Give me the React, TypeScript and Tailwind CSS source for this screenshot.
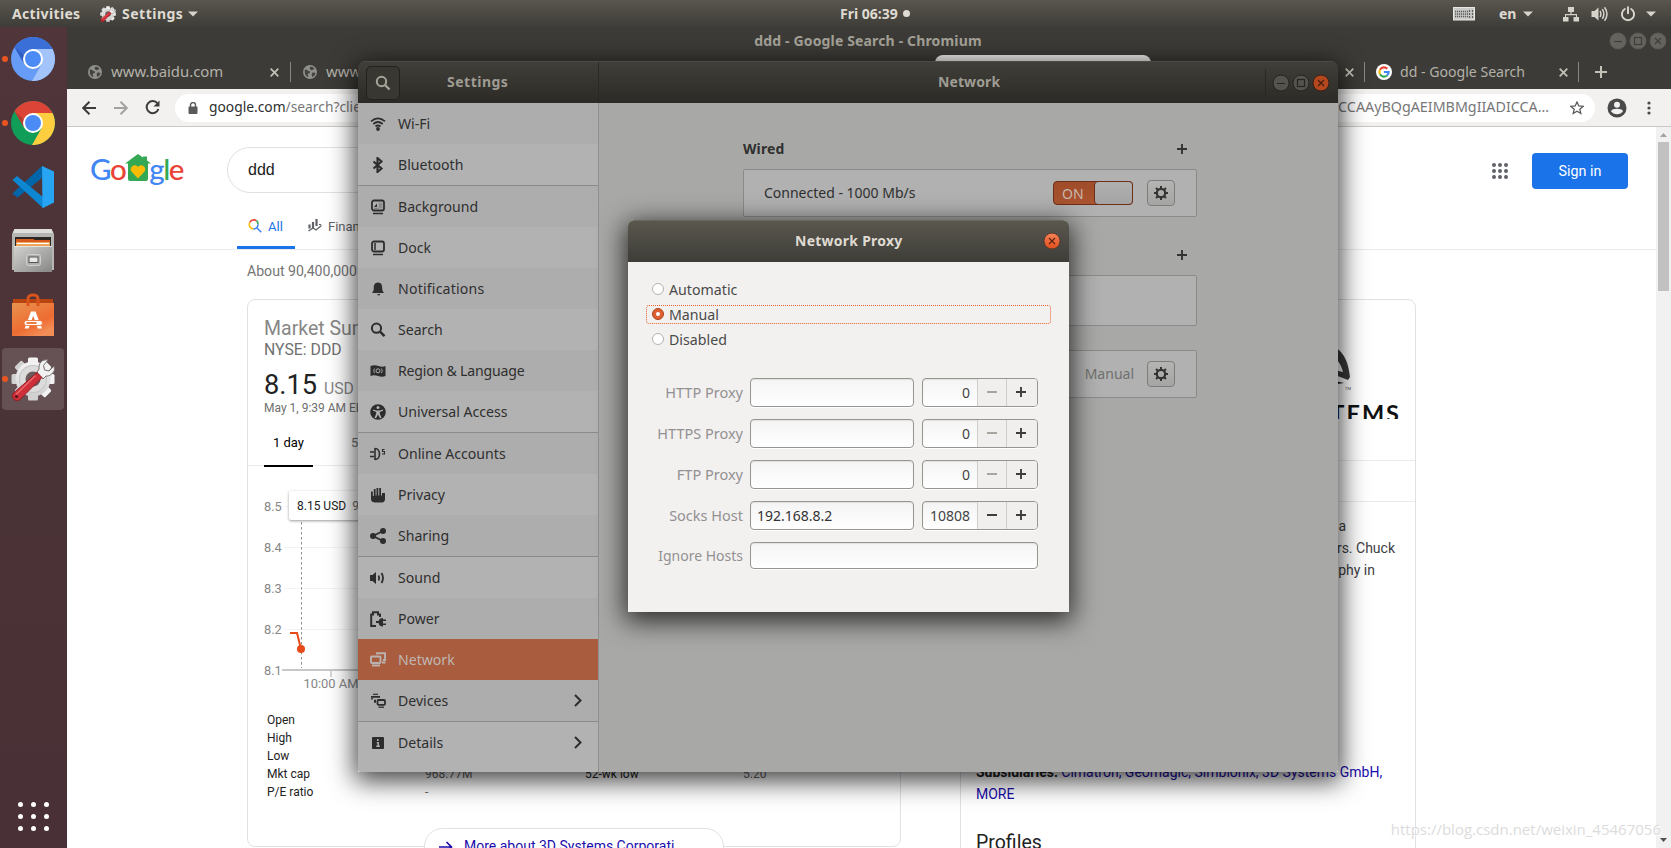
import React from "react";

const UI = "font-['Noto_Sans','Open_Sans',sans-serif]";

/* ---------- top panel ---------- */

function Caret() {
  return (
    <svg width="10" height="6" viewBox="0 0 10 6">
      <path d="M0 0.5h10L5 5.5z" fill="#d6d3cb" />
    </svg>
  );
}

function GearWrench({ size }: { size: number }) {
  return (
    <svg width={size} height={size} viewBox="0 0 44 44">
      <defs>
        <linearGradient id="gearFill" x1="0" y1="0" x2="0" y2="1">
          <stop offset="0" stopColor="#f4f4f4" />
          <stop offset="1" stopColor="#cfcfcf" />
        </linearGradient>
      </defs>
      <g fill="url(#gearFill)">
        {[0, 45, 90, 135].map((a) => (
          <rect key={a} x="17" y="0.5" width="10" height="43" rx="1.5" transform={`rotate(${a} 22 22)`} />
        ))}
        <circle cx="22" cy="22" r="17.5" />
      </g>
      <circle cx="22" cy="22" r="14" fill="#c4c4c4" />
      <circle cx="22" cy="22" r="13" fill="#dcdcdc" />
      <circle cx="22" cy="22" r="7.5" fill="#6d5a5c" />
      <path
        d="M28 18 L32 22 L35 19 C38 19.5 42 17 43.5 13 L43 9 L38 14 L33.5 13 L32.5 8.5 L37 3 C31 2 27.500 6 28 12 L26 15z"
        fill="#f1f1f1"
        stroke="#77716e"
        strokeWidth="1"
      />
      <path d="M26 15.500 L31 20.500 L8.500 43 C5 45.500 -0.500 41 2 36.500z" fill="#cf2f38" stroke="#8f1820" strokeWidth="0.900" />
      <path d="M24.500 18.500 L5 37.500" stroke="#ec6a6c" strokeWidth="1.500" />
      <circle cx="5.500" cy="39.500" r="1.600" fill="#57151a" />
    </svg>
  );
}

function TopPanel() {
  return (
    <div
      className={`absolute inset-x-0 top-0 flex h-[27px] items-center bg-linear-to-b from-[#59564e] to-[#3e3d38] font-bold text-[#dfdbd2] ${UI}`}
    >
      <div className="w-[100px] pl-3 text-[14px] tracking-[0.35px]">Activities</div>
      <div className="flex items-center">
        <GearWrench size={16} />
        <span className="ml-1.5 w-[61px] text-[14px] tracking-[0.5px] whitespace-nowrap">Settings</span>
        <span className="ml-[5px]">
          <Caret />
        </span>
      </div>
      <div className="ml-[642px] flex w-[71px] items-center gap-[5px]">
        <span className="text-[14px] whitespace-nowrap">Fri 06:39</span>
        <span className="size-[7px] shrink-0 rounded-full bg-[#dfdbd2]" />
      </div>
      <div className="ml-auto flex items-center pr-[15px]">
        <svg width="22" height="14" viewBox="0 0 22 14">
          <rect x="0.500" y="0.500" width="21" height="12.500" fill="#c9c9c7" stroke="#e8e6e2" />
          <path d="M2 4.500h13M2 7h13M2 9.500h13" stroke="#5c5b57" strokeWidth="1.400" strokeDasharray="1.200 .8" />
          <path d="M16.500 3v8M19.500 3v8" stroke="#5c5b57" strokeWidth="1.200" strokeDasharray="2 1" />
        </svg>
        <span className="mr-[6px] ml-[24px] w-[18px] text-[14px]">en</span>
        <Caret />
        <svg className="ml-[30px]" width="16" height="16" viewBox="0 0 16 16" fill="#d6d3cb">
          <path d="M5 1h6v5H8.600v2H14v3h2v4.500h-5.500V11H13V9.200H3V11h2.500v4.500H0V11h2V8h5.400V6H5z" />
        </svg>
        <svg className="ml-[12px]" width="17" height="16" viewBox="0 0 17 16" fill="#d6d3cb">
          <path d="M0.500 5h3L7.500 1.500v13L3.500 11h-3z" />
          <path d="M9 5q1.800 3 0 6M11.300 3.200q3.200 4.800 0 9.600M13.500 1.300q5 6.700 0 13.400" fill="none" stroke="#d6d3cb" strokeWidth="1.500" />
        </svg>
        <svg className="ml-[12px]" width="16" height="16" viewBox="0 0 16 16" fill="none" stroke="#d6d3cb" strokeWidth="2" strokeLinecap="round">
          <path d="M4.800 3a6.100 6.100 0 1 0 6.400 0M8 1.200v6" />
        </svg>
        <span className="ml-[10px]">
          <Caret />
        </span>
      </div>
    </div>
  );
}

/* ---------- dock ---------- */

function BrowserIcon({ top, left, right, topShade }: { top: string; left: string; right: string; topShade: string }) {
  return (
    <svg width="44" height="44" viewBox="0 0 44 44">
      <circle cx="22" cy="22" r="22" fill={left} />
      <path d="M3.500 10 A22 22 0 0 1 41.500 12 L22 12 L13.300 27z" fill={top} />
      <path d="M3.500 10 L13.300 27 L12.500 18z" fill={topShade} />
      <path d="M41.500 12 A22 22 0 0 1 21 44 L30.700 27 L22 12z" fill={right} />
      <circle cx="22" cy="22" r="10" fill="#fff" />
      <circle cx="22" cy="22" r="8" fill="#4c8bf5" />
    </svg>
  );
}

function CodeIcon() {
  return (
    <svg width="44" height="44" viewBox="0 0 44 44">
      <path d="M1.500 28.500 L31 1 V13 L6.500 32.500z" fill="#0065a9" />
      <path d="M6 11 L32 32 V43 L1.500 15z" fill="#0d87d1" />
      <path d="M31 1 L43 6.500 V37.500 L32 43 L31.500 43z" fill="#27a5f2" />
    </svg>
  );
}

function FilesIcon() {
  return (
    <svg width="44" height="46" viewBox="0 0 44 46">
      <defs>
        <linearGradient id="cab" x1="0" y1="0" x2="1" y2="1">
          <stop offset="0" stopColor="#d2d2d0" />
          <stop offset="1" stopColor="#878785" />
        </linearGradient>
      </defs>
      <path d="M3.500 1h37l2.500 5v36H1V6z" fill="#b5b5b3" />
      <path d="M3.500 1h37l1.500 4H2z" fill="#dededc" />
      <rect x="4" y="9" width="36" height="10" fill="#2b2722" />
      <path d="M5 11h17l2 1h15v8H5z" fill="#d65a1b" />
      <rect x="5" y="14" width="34" height="6" fill="#f0a050" />
      <path d="M6 15.500h32" stroke="#fff" strokeWidth="1.200" />
      <rect x="3" y="18" width="38" height="26" fill="url(#cab)" />
      <path d="M3 18.500h38" stroke="#e4e4e2" />
      <rect x="15.500" y="26.500" width="14" height="11" rx="2" fill="#b0b0ae" stroke="#d0d0ce" />
      <rect x="18" y="29" width="9" height="5.500" fill="#e8e8e6" stroke="#555" />
    </svg>
  );
}

function SoftwareIcon() {
  return (
    <svg width="44" height="46" viewBox="0 0 44 46">
      <defs>
        <linearGradient id="bag" x1="0" y1="0" x2="0.600" y2="1">
          <stop offset="0" stopColor="#e89350" />
          <stop offset="0.700" stopColor="#ee6c31" />
          <stop offset="1" stopColor="#f38d58" />
        </linearGradient>
      </defs>
      <path d="M2 7h40v8H2z" fill="#b8450f" />
      <rect x="1" y="11" width="42" height="33" fill="url(#bag)" />
      <path d="M17 14V7a4 4 0 0 1 4-4h2a4 4 0 0 1 4 4v7" fill="none" stroke="#d9531d" strokeWidth="3" />
      <path d="M20 19.500h4.500l6.500 17h-4.200l-4.600-12.800-4.600 12.800h-4z" fill="#fff" />
      <rect x="13" y="28.500" width="18.500" height="5" rx="2.500" fill="#fff" stroke="#ee6c31" strokeWidth="0.800" />
      <path d="M15.500 31h10" stroke="#ee6c31" strokeWidth="1.800" />
    </svg>
  );
}

function DockItem({ children, running, active }: { children: React.ReactNode; running?: boolean; active?: boolean }) {
  return (
    <div className="flex h-16 items-center">
      <span className={`z-10 ml-0.5 size-[6px] shrink-0 rounded-full ${running ? "bg-[#e95420]" : ""}`} />
      <div className={`-ml-1.5 flex size-[62px] items-center justify-center rounded-[4px] ${active ? "bg-white/15" : ""}`}>{children}</div>
    </div>
  );
}

function Dock() {
  return (
    <div className="absolute top-[27px] left-0 flex h-[821px] w-[67px] flex-col bg-linear-to-b from-[#50353a] via-[#4a3337] to-[#493036]">
      <DockItem running>
        <BrowserIcon top="#3b6fd8" topShade="#2f5cc0" left="#669cf6" right="#a3c4fb" />
      </DockItem>
      <DockItem running>
        <BrowserIcon top="#db4437" topShade="#b93a2e" left="#0f9d58" right="#ffcd40" />
      </DockItem>
      <DockItem>
        <CodeIcon />
      </DockItem>
      <DockItem>
        <FilesIcon />
      </DockItem>
      <DockItem>
        <SoftwareIcon />
      </DockItem>
      <DockItem running active>
        <GearWrench size={44} />
      </DockItem>
      <div className="mt-auto mb-[17px] ml-[18px] grid w-8 grid-cols-3 gap-x-[7px] gap-y-[7px]">
        {Array.from({ length: 9 }, (_, i) => (
          <span key={i} className="size-[5px] rounded-full bg-white" />
        ))}
      </div>
    </div>
  );
}

/* ---------- browser window ---------- */

function WinBtn({ kind, tone }: { kind: "min" | "max" | "close"; tone: "faded" | "dim" | "dimClose" | "close" }) {
  const fill = { faded: "#65635d", dim: "#55534d", dimClose: "#b5471f", close: "url(#closeFill)" }[tone];
  const ring = { faded: "#5d5b56", dim: "#262521", dimClose: "#3a2018", close: "#5b3a2c" }[tone];
  const ink = { faded: "#3f3e3a", dim: "#262521", dimClose: "#40200f", close: "#5a2410" }[tone];
  return (
    <svg width="18" height="18" viewBox="0 0 18 18" fill="none" stroke={ink} strokeWidth="1.200">
      <defs>
        <linearGradient id="closeFill" x1="0" y1="0" x2="0" y2="1">
          <stop offset="0" stopColor="#f58258" />
          <stop offset="1" stopColor="#e44e1d" />
        </linearGradient>
      </defs>
      <circle cx="9" cy="9" r="8" fill={fill} stroke={ring} strokeWidth="1" />
      {kind === "min" && <path d="M5 9.500h8" />}
      {kind === "max" && <rect x="5.500" y="5.500" width="7" height="7" />}
      {kind === "close" && <path d="M6 6l6 6M12 6l-6 6" />}
    </svg>
  );
}

function Cross() {
  return (
    <svg width="9" height="9" viewBox="0 0 9 9" stroke="#c4c1b8" strokeWidth="1.700">
      <path d="M0.700 0.700l7.600 7.600M8.300 0.700L0.700 8.300" />
    </svg>
  );
}

function Globe() {
  return (
    <svg width="14" height="14" viewBox="0 0 14 14">
      <circle cx="7" cy="7" r="7" fill="#8f8f8d" />
      <path d="M2 4.500c2-.5 2.500 1 4 1.500s1.500 2-.5 2.500S6 11 5 12C2.500 11 1.200 8 2 4.500zM7 2c2-.8 4 .5 4.500 2-1.500 0-1.500 1.500-3 1.200S6 3 7 2zM9 8c1.500-.8 3-.2 3.500 0-.5 2-1.500 3.200-3 4-.8-1-1-3-.5-4z" fill="#44433f" />
    </svg>
  );
}

function GIcon() {
  return (
    <svg width="16" height="16" viewBox="0 0 16 16" fill="none" strokeWidth="2.200">
      <circle cx="8" cy="8" r="8" fill="#fff" />
      <path d="M11.300 4.700A4.600 4.600 0 0 0 4 5.700" stroke="#ea4335" />
      <path d="M4 5.700a4.600 4.600 0 0 0 0 4.600" stroke="#fbbc05" />
      <path d="M4 10.300a4.600 4.600 0 0 0 7 1.200" stroke="#34a853" />
      <path d="M11 11.500A4.600 4.600 0 0 0 12.600 8H8" stroke="#4285f4" />
    </svg>
  );
}

function Tab({ title, icon }: { title: string; icon: React.ReactNode }) {
  return (
    <div className="flex h-5 w-[215px] shrink-0 items-center border-r border-[#8b8983] pr-[11px] pl-[12px]">
      {icon}
      <span className="-mt-px ml-[9px] text-[14.9px] whitespace-nowrap text-[#b4b1a9]">{title}</span>
      <span className="ml-auto">
        <Cross />
      </span>
    </div>
  );
}

function BrowserChrome() {
  return (
    <div className={`flex h-[100px] flex-col ${UI}`}>
      <div className="flex h-7 shrink-0 items-center bg-[#3c3b37]">
        <span className="-mt-0.5 ml-[680px] w-[242px] text-center text-[14px] tracking-[0.15px] font-bold whitespace-nowrap text-[#a5a299]">
          ddd - Google Search - Chromium
        </span>
        <span className="ml-auto flex gap-[2px] pr-[4px]">
          <WinBtn kind="min" tone="faded" />
          <WinBtn kind="max" tone="faded" />
          <WinBtn kind="close" tone="faded" />
        </span>
      </div>
      <div className="flex h-[34px] shrink-0 items-center bg-[#3c3b37] pl-[9px]">
        <Tab title="www.baidu.com" icon={<Globe />} />
        <Tab title="www.baidu.com" icon={<Globe />} />
        <div className="w-[429px]" />
        <div className="h-full w-[216px] rounded-t-lg bg-[#f2f1f0]" />
        <div className="flex h-5 w-[214px] items-center justify-end border-r border-[#8b8983] pr-[10px]">
          <Cross />
        </div>
        <div className="flex h-5 w-[214px] items-center border-r border-[#8b8983] pr-[10px] pl-[11px]">
          <GIcon />
          <span className="ml-2 text-[14.1px] whitespace-nowrap text-[#b4b1a9]">dd - Google Search</span>
          <span className="ml-auto">
            <Cross />
          </span>
        </div>
        <svg className="ml-4" width="12" height="12" viewBox="0 0 12 12" stroke="#c4c1b8" strokeWidth="2">
          <path d="M6 0v12M0 6h12" />
        </svg>
      </div>
      <div className="flex h-[38px] shrink-0 items-center border-b border-[#c9c8c6] bg-[#f2f1f0] pl-[15px]">
        <svg width="14" height="14" viewBox="0 0 14 14" fill="none" stroke="#3d3c3a" strokeWidth="2">
          <path d="M14 7H1.500M7.500 0.700L1.200 7l6.300 6.300" />
        </svg>
        <svg className="ml-[18px]" width="14" height="14" viewBox="0 0 14 14" fill="none" stroke="#a3a2a0" strokeWidth="2">
          <path d="M0 7h12.500M6.500 0.700L12.800 7l-6.300 6.300" />
        </svg>
        <svg className="ml-[17px]" width="15" height="15" viewBox="0 0 15 15" fill="none" stroke="#3d3c3a" strokeWidth="2">
          <path d="M12.500 3.500A6 6 0 1 0 13.400 9" />
          <path d="M14.500 0.500v6h-6z" fill="#3d3c3a" stroke="none" />
        </svg>
        <div className="ml-[15px] flex h-7 w-[1420px] items-center rounded-full bg-white pr-[11px] pl-[13px]">
          <svg width="10" height="12" viewBox="0 0 10 12">
            <rect x="0.500" y="4.500" width="9" height="7.500" rx="1" fill="#5a5a5a" />
            <path d="M2.500 5V3a2.500 2.500 0 0 1 5 0v2" fill="none" stroke="#5a5a5a" strokeWidth="1.400" />
          </svg>
          <span className="ml-[11px] text-[13.8px] whitespace-nowrap text-[#777]">
            <span className="text-[#2e2e2e]">google.com</span>/search?client
          </span>
          <span className="-mt-px ml-auto text-[14.3px] whitespace-nowrap text-[#777]">DICCAAyBQgAEIMBMgIIADICCA…</span>
          <svg className="ml-[21px]" width="14" height="14" viewBox="0 0 14 14" fill="none" stroke="#5a5a5a" strokeWidth="1.300">
            <path d="M7 1l1.800 4 4.300.4-3.300 2.900 1 4.200L7 10.300l-3.800 2.200 1-4.200L.9 5.400 5.200 5z" />
          </svg>
        </div>
        <svg className="ml-[12px]" width="20" height="20" viewBox="0 0 20 20">
          <circle cx="10" cy="10" r="9.500" fill="#4a4a4a" />
          <circle cx="10" cy="6.800" r="3" fill="#f2f1f0" />
          <path d="M4 13.200c1-3.200 11-3.200 12 0-2.500 4-9.500 4-12 0z" fill="#f2f1f0" />
        </svg>
        <svg className="ml-[20px]" width="4" height="14" viewBox="0 0 4 14" fill="#4a4a4a">
          <circle cx="2" cy="2" r="1.600" />
          <circle cx="2" cy="7" r="1.600" />
          <circle cx="2" cy="12" r="1.600" />
        </svg>
      </div>
    </div>
  );
}

function GoogleLogo() {
  return (
    <div className="flex h-[46px] w-[136px] items-center text-[29.5px] leading-none tracking-[-1.5px] font-['Lato',sans-serif] font-medium">
      <span className="-mt-0.5 -ml-px text-[#4285f4]">G</span>
      <span className="-mt-0.5 text-[#ea4335]">o</span>
      <svg className="-mt-[6px] mr-[-1px] ml-0" width="26" height="27" viewBox="0 0 26 27">
        <path d="M0 9.500L13 0l5 3.500V2.500h4v4L26 9.500H23V25a2 2 0 0 1-2 2H5a2 2 0 0 1-2-2V9.500z" fill="#34a853" />
        <path d="M13 24.500L6.500 17.500c-3-4.500 3.500-9 6.500-4.500 3-4.500 9.500 0 6.500 4.500z" fill="#fbbc05" />
      </svg>
      <span className="-mt-0.5 -ml-[1px] text-[#4285f4]">g</span>
      <span className="-mt-0.5 text-[#34a853]">l</span>
      <span className="-mt-0.5 text-[#ea4335]">e</span>
    </div>
  );
}

function PageHeader() {
  return (
    <div className="flex h-[123px] shrink-0 flex-col border-b border-[#ebebeb]">
      <div className="mt-5 flex h-[46px] items-center pl-6">
        <GoogleLogo />
        <div className="flex h-[46px] w-[692px] items-center rounded-full border border-[#dfe1e5] pl-5 text-[16px] text-[#222] font-['Liberation_Sans',sans-serif]">
          <span>ddd</span>
        </div>
        <div className="mt-[2px] ml-auto flex items-center pr-7">
          <div className="mr-6 grid grid-cols-3 gap-[2px]">
            {Array.from({ length: 9 }, (_, i) => (
              <span key={i} className="size-1 rounded-full bg-[#5f6368]" />
            ))}
          </div>
          <div className="flex h-9 w-24 items-center justify-center rounded-[4px] bg-[#1a73e8] pt-px text-[14.3px] text-white">Sign in</div>
        </div>
      </div>
      <div className="mt-auto flex h-10 pl-[170px] text-[13px]">
        <div className="flex w-[58px] items-start border-b-[3px] border-[#1a73e8] pt-[8px] pl-[11px] text-[#1a73e8]">
          <svg className="mt-[2px] mr-[6px]" width="14" height="14" viewBox="0 0 14 14" fill="none" strokeWidth="1.600">
            <path d="M1.700 3.500A4.600 4.600 0 0 1 8.500 1.700" stroke="#ea4335" />
            <path d="M8.500 1.700A4.600 4.600 0 0 1 10 5.500" stroke="#34a853" />
            <path d="M1.700 3.500A4.600 4.600 0 0 0 5.500 10" stroke="#fbbc05" />
            <path d="M5.500 10A4.600 4.600 0 0 0 10 5.500M8.700 8.700L13.300 13.300" stroke="#4285f4" />
          </svg>
          All
        </div>
        <div className="flex items-start pt-[8px] pl-[13px] text-[#5f6368]">
          <svg className="mt-[2px] mr-[6px]" width="14" height="13" viewBox="0 0 14 13" fill="none" stroke="#5f6368">
            <path d="M1.500 5.500v4M5 3v6M8.500 0v7M12 5v1" strokeWidth="2.200" />
            <path d="M0.500 12l4.500-3 3 2 5.500-4.500" strokeWidth="1.400" />
          </svg>
          Finance
        </div>
      </div>
    </div>
  );
}

function PriceChart() {
  return (
    <svg width="652" height="245" viewBox="248 466 652 245" className="block shrink-0" fontFamily="Roboto, sans-serif" fontSize="12.8" fill="#878787">
      {[507, 548, 589, 630].map((y) => (
        <path key={y} d={`M284 ${y - 0.5}H880`} stroke="#f3f3f3" />
      ))}
      {["8.5", "8.4", "8.3", "8.2", "8.1"].map((t, i) => (
        <text key={t} x="264" y={511 + i * 41}>
          {t}
        </text>
      ))}
      <path d="M282 670H880" stroke="#c8c8c8" strokeWidth="2" />
      <path d="M331 670v7" stroke="#c8c8c8" strokeWidth="1.500" />
      <text x="303.500" y="688" fontSize="12.9">
        10:00 AM
      </text>
      <path d="M301.500 522V668" stroke="#909090" strokeDasharray="2.500 2.500" />
      <path d="M290 633H297L301 649" fill="none" stroke="#e64a19" strokeWidth="2" />
      <circle cx="301" cy="649" r="4" fill="#e64a19" />
    </svg>
  );
}

const quotes = [
  ["Open", "", "", ""],
  ["High", "", "", ""],
  ["Low", "", "", ""],
  ["Mkt cap", "968.77M", "52-wk low", "5.20"],
  ["P/E ratio", "-", "", ""],
];

function MarketCard() {
  return (
    <div className="relative flex h-[548px] w-[654px] flex-col rounded-lg border border-[#dfe1e5]">
      <div className="pt-[17px] pl-4">
        <div className="h-6 text-[19.5px] leading-6 text-[#878787]">Market Summary</div>
        <div className="h-5 text-[15.8px] leading-[18px] text-[#707070]">NYSE: DDD</div>
        <div className="mt-[7px] h-[34px] leading-[34px] text-[#222]">
          <span className="text-[27.2px]">8.15</span> <span className="ml-[3px] text-[15.8px] text-[#878787]">USD</span>
        </div>
        <div className="h-[14px] text-[12px] leading-[13px] text-[#707070]">May 1, 9:39 AM EDT</div>
      </div>
      <div className="flex h-[50px] border-b border-[#ebebeb] pl-4 text-[13px] leading-[54px] text-[#757575]">
        <div className="-mb-[2px] w-[49px] border-b-2 border-black text-center text-black">1 day</div>
        <div className="pl-[38px]">5 days</div>
      </div>
      <PriceChart />
      <div className="grid grid-cols-[158px_160px_158px_1fr] pl-[19px] text-[12px] leading-[18px] text-[#222]">
        {quotes.flatMap((row, r) =>
          row.map((cell, c) => (
            <span key={`${r}-${c}`} className={`h-[18px] ${c % 2 ? "text-[#666]" : ""}`}>
              {cell}
            </span>
          )),
        )}
      </div>
      <div className="absolute top-[191px] left-[41px] flex h-[29px] w-[150px] items-center gap-[6px] rounded-[2px] bg-white pl-2 text-[12px] whitespace-nowrap text-[#222] shadow-[0_1px_3px_rgba(0,0,0,0.4)]">
        <span>8.15 USD</span>
        <span className="text-[#757575]">9:39 AM</span>
      </div>
      <div className="absolute top-[528px] left-[176px] flex h-[37px] w-[300px] items-center rounded-full border border-[#dfe1e5] bg-white pl-[14px] text-[14px] whitespace-nowrap text-[#1a0dab]">
        <svg className="mr-[11px]" width="14" height="12" viewBox="0 0 14 12" fill="none" stroke="#1a0dab" strokeWidth="1.700">
          <path d="M0 6h12M7.500 1l5 5-5 5" />
        </svg>
        More about 3D Systems Corporati
      </div>
    </div>
  );
}

function KnowledgeCard() {
  return (
    <div className="flex h-[560px] w-[456px] flex-col rounded-t-lg border border-[#dfe1e5] text-[14px] leading-[22px] text-[#3c4043]">
      <div className="flex h-[161px] flex-col items-end border-b border-[#ebebeb] pt-[44px] pr-[14px]">
        <svg className="mr-[47px]" width="44" height="46" viewBox="0 -2 44 46">
          <path d="M14 -2C31 0 38 12 40 31L38 34 20 27V23L33 26C31 18 28 14 22 9z" fill="#3a3a3a" />
          <path d="M20 34L34 37 20 39z" fill="#111" />
          <text x="35" y="43.500" fontSize="4" fill="#555" fontFamily="Roboto, sans-serif">
            TM
          </text>
        </svg>
        <div className="mt-[10px] flex h-[19px] items-start overflow-hidden text-[23.500px] leading-[26px] font-bold tracking-[2px] text-[#111] font-['Lato',sans-serif]">
          SYSTEMS
        </div>
      </div>
      <div className="h-[41px] shrink-0 border-b border-[#ebebeb]" />
      <div className="mt-[13px] h-[66px] whitespace-nowrap">
        <div className="w-[385px] text-right">a</div>
        <div className="w-[434px] text-right">ers. Chuck</div>
        <div className="w-[414px] text-right">graphy in</div>
      </div>
      <div className="mt-[180px] h-[44px] pl-[15px] whitespace-nowrap">
        <b className="text-[#222]">Subsidiaries:</b> <span className="text-[#1a0dab]">Cimatron, Geomagic, Simbionix, 3D Systems GmbH,</span>
        <div className="text-[#1a0dab]">MORE</div>
      </div>
      <div className="mt-[27px] pl-[15px] text-[19.500px] text-[#222]">Profiles</div>
    </div>
  );
}

function Browser() {
  return (
    <div className="absolute top-[27px] left-[67px] h-[821px] w-[1604px] overflow-hidden bg-white">
      <BrowserChrome />
      <div className="flex h-[721px] font-['Roboto',sans-serif]">
        <div className="flex h-[721px] w-[1589px] flex-col overflow-hidden">
          <PageHeader />
          <div className="flex gap-[59px] pl-[180px]">
            <div>
              <div className="h-[49px] pt-[10px] text-[14.100px] leading-[22px] text-[#757575]">About 90,400,000 results</div>
              <MarketCard />
            </div>
            <div className="pt-[49px]">
              <KnowledgeCard />
            </div>
          </div>
        </div>
        <div className="flex w-[15px] flex-col items-center bg-[#f1f1f1]">
          <svg className="my-[6px] h-[4px] shrink-0" width="7" height="4" viewBox="0 0 7 4">
            <path d="M0 4h7L3.500 0z" fill="#a3a3a3" />
          </svg>
          <div className="-mt-[1px] h-[149px] w-[11px] bg-[#c1c1c1]" />
          <svg className="mt-auto mb-[6px]" width="7" height="4" viewBox="0 0 7 4">
            <path d="M0 0h7L3.500 4z" fill="#505050" />
          </svg>
        </div>
      </div>
    </div>
  );
}

/* ---------- settings window ---------- */

const D = "#2d2d2d";

const icons: Record<string, React.ReactNode> = {
  wifi: (
    <g fill="none" stroke={D} strokeWidth="1.700">
      <path d="M1 5.300q7-6 14 0M3.300 8q4.700-4 9.400 0M5.500 10.500q2.500-2 5 0" />
      <circle cx="8" cy="13" r="1.900" fill={D} stroke="none" />
    </g>
  ),
  bluetooth: <path d="M3.500 4.500l8 7L7.500 15V1l4 3.500-8 7" fill="none" stroke={D} strokeWidth="2.100" />,
  background: (
    <g>
      <rect x="2" y="1.500" width="12" height="10" rx="2" fill="#b0b0b0" stroke={D} strokeWidth="1.800" />
      <rect x="8.500" y="3.500" width="4" height="6" fill="#8d8d8d" />
      <path d="M4 8l3-3.500V8z" fill={D} />
      <path d="M4 9.300h4.500" stroke="#777" strokeWidth="1" />
      <path d="M3 14.500h10" stroke={D} strokeWidth="1.500" />
    </g>
  ),
  dock: (
    <g>
      <rect x="2" y="1.500" width="12" height="10" rx="2" fill="none" stroke={D} strokeWidth="1.800" />
      <path d="M5 3v7" stroke={D} strokeWidth="1.500" />
      <path d="M3 14.500h10" stroke={D} strokeWidth="1.500" />
    </g>
  ),
  bell: <path d="M8 1.500c3.500 0 4.200 2.800 4.200 5.500 0 2.500.8 4 2 5H1.800c1.200-1 2-2.500 2-5 0-2.700.7-5.500 4.200-5.500zM7.500 13h2.500v1.200H7.500z" fill={D} />,
  search: (
    <g fill="none" stroke={D} strokeWidth="2">
      <circle cx="6.500" cy="6.200" r="4.600" />
      <path d="M10 9.700l4.500 4.500" strokeWidth="2.400" />
    </g>
  ),
  region: (
    <g>
      <path d="M0.500 3q4-1.500 8 0t7 0v10q-3.500 1.500-7.500 0t-7.500 0z" fill={D} />
      <circle cx="8" cy="7.800" r="2" fill="none" stroke="#b0b0b0" />
      <path d="M4.500 5.500q-1.500 2.300 0 4.600M11.500 5.500q1.500 2.300 0 4.600" stroke="#b0b0b0" fill="none" strokeWidth="0.900" />
    </g>
  ),
  access: (
    <g>
      <circle cx="8" cy="8" r="7.800" fill={D} />
      <circle cx="8" cy="3.600" r="1.500" fill="#b2b2b2" />
      <path d="M2.800 5.500L6.500 6.500h3l3.700-1-.3 1.300-3.200 1.200.2 2 1.600 3.800-1.500.5L8 10.500 6 14.300l-1.500-.5L6.100 10l.2-2-3.200-1.200z" fill="#b2b2b2" />
    </g>
  ),
  accounts: (
    <g fill="none" stroke={D} strokeWidth="1.600">
      <path d="M5 2v12M5 2.500c6 0 6 11 0 11" />
      <path d="M0 6h4M0 10.500h4" />
      <path d="M14.500 3.500h-2v2h2v2.500h-2.500" strokeWidth="1.100" />
    </g>
  ),
  hand: <path d="M1 4.500h1.800V9h1V2h1.800v6.500h.9V1h1.800v7.500h.9V1h1.800v7.500h1V6H15v6.500q-.5 3-3 3H4.500q-3.500-.5-3.500-3.500z" fill={D} />,
  share: (
    <g fill={D}>
      <circle cx="3" cy="8" r="3" />
      <circle cx="13" cy="3" r="3" />
      <circle cx="13" cy="13" r="3" />
      <path d="M13 3L3 8l10 5" fill="none" stroke={D} strokeWidth="1.900" />
    </g>
  ),
  sound: (
    <g>
      <path d="M0 5h2.500L6 2v12L2.500 11H0z" fill={D} />
      <path d="M8.500 5.500q1.500 2.500 0 5M11.500 3q3 5 0 10" fill="none" stroke={D} strokeWidth="1.800" />
    </g>
  ),
  power: (
    <g>
      <path d="M6 15H1.200V3.500H3V1.200h5V3.500h2V6" fill="none" stroke={D} strokeWidth="2" />
      <path d="M6 10h2.500q1-3 4.500-3v1.500h3V10h-3v2.500h3V14h-3v1.500q-3.500.3-4.500-3.500H6z" fill={D} />
    </g>
  ),
  network: (
    <g fill="none" stroke="#b9b2ae" strokeWidth="1.900">
      <path d="M7 2.500V1.200h8V8h-2" />
      <rect x="1" y="4.500" width="9.500" height="6.500" rx="0.800" />
      <path d="M2 13.500h8M12 10.500h3.500" strokeWidth="2" />
    </g>
  ),
  devices: (
    <g fill="none" stroke={D}>
      <path d="M3 1.300h5" strokeWidth="1.200" />
      <path d="M1 3.800h9M2 5v1.500M4 7.500h2M4 9h2" strokeWidth="1.700" />
      <rect x="7.500" y="7" width="7.500" height="4.800" rx="1" strokeWidth="1.800" />
      <path d="M8.500 14.200h5.500" strokeWidth="1.300" />
    </g>
  ),
  details: (
    <g>
      <rect x="2" y="2" width="12" height="12" rx="1" fill={D} />
      <path d="M7.800 4v2M6.800 7.800h1.400V11M6.300 11.300h3.500" fill="none" stroke="#b2b2b2" strokeWidth="1.500" />
    </g>
  ),
};

type Item = { id: string; label: string; sep?: boolean; more?: boolean };

const items: Item[] = [
  { id: "wifi", label: "Wi-Fi" },
  { id: "bluetooth", label: "Bluetooth", sep: true },
  { id: "background", label: "Background" },
  { id: "dock", label: "Dock" },
  { id: "bell", label: "Notifications" },
  { id: "search", label: "Search" },
  { id: "region", label: "Region & Language" },
  { id: "access", label: "Universal Access", sep: true },
  { id: "accounts", label: "Online Accounts" },
  { id: "hand", label: "Privacy" },
  { id: "share", label: "Sharing", sep: true },
  { id: "sound", label: "Sound" },
  { id: "power", label: "Power" },
  { id: "network", label: "Network" },
  { id: "devices", label: "Devices", sep: true, more: true },
  { id: "details", label: "Details", more: true },
];

function Sidebar() {
  return (
    <div className="flex w-[241px] shrink-0 flex-col border-r border-[#8f8f8d] bg-[#b2b2b2]">
      {items.map((it, i) => (
        <React.Fragment key={it.id}>
          <div
            className={`flex h-[41px] shrink-0 items-center pl-3 text-[14.1px] ${
              it.id === "network" ? "bg-[#a95c3e] text-[#bfb6b2]" : i % 2 ? "bg-[#b2b2b2] text-[#2f2f2f]" : "bg-[#adadad] text-[#2f2f2f]"
            }`}
          >
            <svg width="16" height="16" viewBox="0 0 16 16">
              {icons[it.id]}
            </svg>
            <span className={`ml-3 whitespace-nowrap ${it.id === "region" ? "tracking-[-0.2px]" : it.id === "bell" ? "tracking-[0.2px]" : ""}`}>
              {it.label}
            </span>
            {it.more && (
              <svg className="mr-[16px] ml-auto" width="8" height="13" viewBox="0 0 8 13" fill="none" stroke={D} strokeWidth="2">
                <path d="M1 1l5.500 5.500L1 12" />
              </svg>
            )}
          </div>
          {it.sep && <div className="h-px shrink-0 bg-[#8b8b89]" />}
        </React.Fragment>
      ))}
    </div>
  );
}

function Plus({ color = "#333" }: { color?: string }) {
  return (
    <svg width="10" height="10" viewBox="0 0 10 10" stroke={color} strokeWidth="1.900">
      <path d="M5 0v10M0 5h10" />
    </svg>
  );
}

function GearButton() {
  return (
    <div className="flex h-[26px] w-7 items-center justify-center rounded-[4px] border border-[#7d7d7b] bg-linear-to-b from-[#b4b4b3] to-[#a5a5a4]">
      <svg width="16" height="16" viewBox="0 0 16 16">
        {[0, 45, 90, 135].map((a) => (
          <path key={a} d="M8 1v2.500M8 12.500V15" stroke="#333" strokeWidth="2" transform={`rotate(${a} 8 8)`} />
        ))}
        <circle cx="8" cy="8" r="4.200" fill="none" stroke="#333" strokeWidth="2.200" />
      </svg>
    </div>
  );
}

function Switch() {
  return (
    <div className="flex h-6 w-20 items-stretch rounded-[4px] border border-[#6f2f17] bg-linear-to-b from-[#9f4c2a] to-[#ab5430]">
      <span className="flex w-10 items-center pl-2 text-[14px] text-[#c9b7af]">ON</span>
      <span className="-my-px -mr-px flex-1 rounded-[4px] border border-[#6f2f17] bg-linear-to-b from-[#b0b0b0] to-[#a4a4a4]" />
    </div>
  );
}

function NetworkPanel() {
  return (
    <div className="flex flex-1 flex-col bg-[#a8a8a6] pl-[144px] text-[14px] text-[#2f2f2f]">
      <div className="mt-9 flex h-5 w-[454px] items-center justify-between pr-[10px]">
        <span className="text-[13.900px] tracking-[0.15px] font-bold">Wired</span>
        <Plus />
      </div>
      <div className="mt-[10px] flex h-12 w-[454px] items-center rounded-[2px] border border-[#8b8b89] bg-[#b1b1b1] pr-[21px] pl-5">
        <span className="-mt-0.5 text-[14px] whitespace-nowrap">Connected - 1000 Mb/s</span>
        <span className="ml-auto">
          <Switch />
        </span>
        <span className="ml-[14px]">
          <GearButton />
        </span>
      </div>
      <div className="mt-7 flex h-5 w-[454px] items-center justify-between pr-[10px]">
        <span className="font-bold">VPN</span>
        <Plus />
      </div>
      <div className="mt-[10px] h-[51px] w-[454px] rounded-[2px] border border-[#8b8b89] bg-[#b1b1b1]" />
      <div className="mt-6 flex h-12 w-[454px] items-center justify-end rounded-[2px] border border-[#8b8b89] bg-[#b1b1b1] pr-[21px]">
        <span className="-mt-0.5 text-[#70706e]">Manual</span>
        <span className="ml-[13px]">
          <GearButton />
        </span>
      </div>
    </div>
  );
}

function SettingsWindow() {
  return (
    <div
      className={`absolute top-[61px] left-[358px] flex h-[711px] w-[980px] flex-col overflow-hidden rounded-t-[7px] rounded-b-[2px] ${UI}`}
    >
      <div className="flex h-[42px] shrink-0 border-t border-[#4c4b45] bg-linear-to-b from-[#403f39] to-[#2b2a26] text-[14px] font-bold text-[#9f9c93]">
        <div className="flex w-[241px] items-center border-r border-[#2a2925] pl-2">
          <div className="flex h-[34px] w-[34px] items-center justify-center rounded-[5px] border border-[#23221f] bg-[#383731]">
            <svg width="16" height="16" viewBox="0 0 16 16" fill="none" stroke="#a5a299" strokeWidth="2">
              <circle cx="6.500" cy="6.500" r="4.700" />
              <path d="M10 10l4.500 4.500" strokeWidth="2.400" />
            </svg>
          </div>
          <span className="-mt-0.5 ml-[47px] tracking-[0.5px]">Settings</span>
        </div>
        <div className="flex flex-1 items-center">
          <span className="-mt-0.5 ml-[339px] w-[63px] tracking-[0.1px]">Network</span>
          <span className="ml-auto h-7 border-l border-[#2a2925]" />
          <span className="ml-[6px] flex gap-[2px] pr-[8px]">
            <WinBtn kind="min" tone="dim" />
            <WinBtn kind="max" tone="dim" />
            <WinBtn kind="close" tone="dimClose" />
          </span>
        </div>
      </div>
      <div className="flex flex-1">
        <Sidebar />
        <NetworkPanel />
      </div>
    </div>
  );
}

/* ---------- proxy dialog ---------- */

function Radio({ label, on }: { label: string; on?: boolean }) {
  return (
    <div
      className={`flex h-[19px] w-[405px] items-center rounded-[3px] border border-dotted pl-[5px] ${on ? "border-[#e9622f]" : "border-transparent"}`}
    >
      <span
        className={`mb-px flex size-3 items-center justify-center rounded-full border ${
          on ? "border-[#b1451c] bg-[#dd5f33]" : "border-[#b5b3b0] bg-white"
        }`}
      >
        {on && <span className="size-1 rounded-full bg-white" />}
      </span>
      <span className="mt-px ml-[5px] text-[14.2px] leading-none text-[#4a4a4a]">{label}</span>
    </div>
  );
}

const field = "border border-[#979591] bg-linear-to-b from-[#f4f4f4] to-white shadow-[inset_0_1px_1px_rgba(0,0,0,0.08),0_1px_0_#fff]";

function ProxyRow({ label, host, port }: { label: string; host: string; port: string }) {
  return (
    <div className="flex h-[29px] items-center">
      <span className="w-[115px] text-right text-[14.5px] whitespace-nowrap text-[#929090]">{label}</span>
      <div className={`ml-[7px] flex h-[29px] w-[164px] items-center rounded-[4px] pl-[6px] text-[#333] ${field}`}>{host}</div>
      <div className={`ml-2 flex h-[29px] w-[116px] items-stretch overflow-hidden rounded-[4px] ${field}`}>
        <span className="flex w-[54px] items-center justify-end pr-[7px] text-[#444]">{port}</span>
        <span className="flex w-[29px] items-center justify-center border-l border-[#d0cecb] bg-[#f0efed]">
          <span className={`-mt-px h-0.5 w-[10px] ${port === "0" ? "bg-[#aaa49f]" : "bg-[#3d3d3d]"}`} />
        </span>
        <span className="flex flex-1 items-center border-l border-[#d0cecb] bg-[#f0efed] pb-px pl-[9px]">
          <Plus color="#3d3d3d" />
        </span>
      </div>
    </div>
  );
}

function ProxyDialog() {
  return (
    <div
      className={`absolute top-[220px] left-[628px] flex h-[392px] w-[441px] flex-col rounded-t-[6px] bg-[#f2f1f0] shadow-[0_6px_26px_3px_rgba(0,0,0,0.75)] ${UI}`}
    >
      <div className="flex h-[42px] items-center rounded-t-[6px] border-t border-[#6a675e] bg-linear-to-b from-[#5a574e] to-[#3e3d38]">
        <span className="-mt-0.5 ml-[167px] w-[108px] text-[14px] tracking-[0.25px] font-bold whitespace-nowrap text-[#dfdbd2]">Network Proxy</span>
        <span className="mr-2 mb-px ml-auto">
          <WinBtn kind="close" tone="close" />
        </span>
      </div>
      <div className="mt-[18px] flex flex-col gap-[6px] pl-[18px]">
        <Radio label="Automatic" />
        <Radio label="Manual" on />
        <Radio label="Disabled" />
      </div>
      <div className="mt-[29px] flex flex-col gap-3 text-[14px]">
        <ProxyRow label="HTTP Proxy" host="" port="0" />
        <ProxyRow label="HTTPS Proxy" host="" port="0" />
        <ProxyRow label="FTP Proxy" host="" port="0" />
        <ProxyRow label="Socks Host" host="192.168.8.2" port="10808" />
        <div className="flex h-[27px] items-center">
          <span className="w-[115px] text-right whitespace-nowrap text-[#929090]">Ignore Hosts</span>
          <div className={`ml-[7px] h-[27px] w-[288px] rounded-[4px] ${field}`} />
        </div>
      </div>
    </div>
  );
}

export default function App() {
  return (
    <div className="relative h-[848px] w-[1671px] overflow-hidden bg-[#4a3337]">
      <Browser />
      <div className="absolute top-[61px] left-[358px] h-[711px] w-[980px] rounded-t-[7px] shadow-[0_6px_26px_3px_rgba(0,0,0,0.75)]" />
      <TopPanel />
      <Dock />
      <SettingsWindow />
      <ProxyDialog />
      <div className="absolute right-[10px] bottom-[9px] text-[15px] leading-5 text-[#dcdcdc] [text-shadow:1px_1px_0_#fff] font-['Open_Sans',sans-serif]">
        https://blog.csdn.net/weixin_45467056
      </div>
    </div>
  );
}
